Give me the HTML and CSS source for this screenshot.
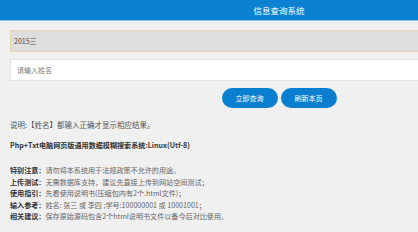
FILE: index.html
```html
<!DOCTYPE html>
<html lang="zh">
<head>
<meta charset="utf-8">
<title>信息查询系统</title>
<link rel="stylesheet" href="styles.css">
</head>
<body>
<div class="page">
  <header class="top">信息查询系统</header>
  <div class="form">
    <div class="field field-active">2015三</div>
    <div class="field field-empty">请输入姓名</div>
    <div class="actions">
      <span class="btn">立即查询</span>
      <span class="btn">刷新本页</span>
    </div>
  </div>
  <div class="info">
    <p class="note">说明:【姓名】都输入正确才显示相应结果。</p>
    <p class="title">Php+Txt电脑网页版通用数据模糊搜索系统:Linux(Utf-8)</p>
    <ul class="list">
      <li><b>特别注意：</b>请勿将本系统用于法规政策不允许的用途。</li>
      <li><b>上传测试：</b>无需数据库支持，建议先直接上传到网站空间测试；</li>
      <li><b>使用指引：</b>先看使用说明书(压缩包内有2个.html文件)；</li>
      <li><b>输入参考：</b>姓名: 张三 或 李四 ;学号:100000001 或 10001001；</li>
      <li><b>相关建议：</b>保存原始源码包含2个html说明书文件以备今后对比使用。</li>
    </ul>
  </div>
</div>
</body>
</html>
```
FILE: styles.css
```css
html, body {
  margin: 0;
  padding: 0;
  background: #f0f0f0;
  overflow: hidden;
}
.page {
  width: 558px;
  font-family: "Noto Sans CJK SC", "Noto Sans", sans-serif;
  color: #444;
}
.top {
  height: 20px;
  line-height: 20px;
  background: #0a81d1;
  border-bottom: 1px solid #8cc4ea;
  color: #fff;
  text-align: center;
  font-size: 8.5px;
}
.form {
  padding: 9px 10px 0;
}
.field {
  box-sizing: border-box;
  height: 22px;
  line-height: 20px;
  padding: 0 5px;
  font-size: 7px;
}
.field-active {
  background: #dedede;
  border: 1px solid #e6d6ae;
  color: #444;
  padding-left: 3px;
}
.field-empty {
  margin-top: 7px;
  background: #fff;
  border: 1px solid #e4e4e4;
  color: #777;
  padding-left: 6px;
}
.actions {
  display: flex;
  justify-content: center;
  gap: 3px;
  margin-top: 7px;
}
.btn {
  width: 56px;
  height: 20px;
  line-height: 20px;
  border-radius: 10px;
  background: #0a7fcf;
  color: #fff;
  text-align: center;
  font-size: 7px;
}
.info {
  padding: 0 10px;
  font-size: 7.1px;
}
.info p {
  margin: 0;
  line-height: 11px;
}
.note {
  margin-top: 11px !important;
  color: #555;
  font-size: 7.5px;
}
.title {
  margin-top: 10px !important;
  font-weight: bold;
  color: #333;
}
.list {
  list-style: none;
  margin: 14px 0 0;
  padding: 0;
  line-height: 11.6px;
  color: #666;
}
.list b {
  color: #333;
}
```
